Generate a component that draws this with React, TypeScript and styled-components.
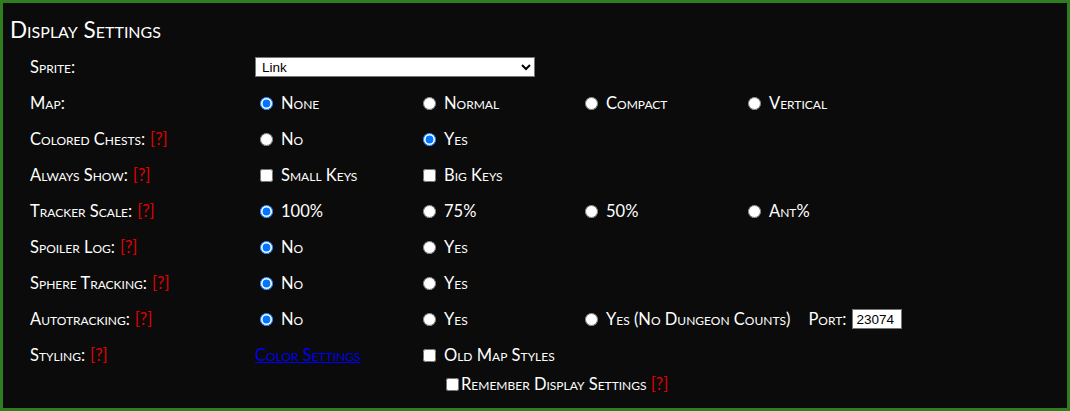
import React from "react";
import styled, { createGlobalStyle } from "styled-components";

const Global = createGlobalStyle`
  html, body { margin: 0; padding: 0; background: #0b0b0b; }
  body { font-family: "Lato", "DejaVu Sans", sans-serif; }
`;

const Panel = styled.div`
  box-sizing: border-box;
  width: 1070px;
  height: 411px;
  border: 3px solid #2e7d1f;
  background: #0b0b0b;
  color: #fff;
  padding: 14px 7px 0 7px;
  font-variant: small-caps;
  font-family: "Lato", "DejaVu Sans", sans-serif;
`;

const Title = styled.h2`
  margin: 0 0 6px 0;
  font-size: 22.5px;
  font-weight: normal;
  line-height: 26px;
`;

const Table = styled.div`
  display: grid;
  grid-template-columns: 225px 163px 162px 163px 163px;
  grid-auto-rows: 36px;
  padding-left: 20px;
  font-size: 16.5px;
`;

const Label = styled.div`
  display: flex;
  align-items: center;
  gap: 5px;
`;

const Cell = styled.label<{ $span?: number }>`
  display: flex;
  align-items: center;
  white-space: nowrap;
  grid-column: span ${(p) => p.$span ?? 1};
  input[type="radio"], input[type="checkbox"] {
    margin: 0 8px 0 5px;
    width: 13px;
    height: 13px;
  }
`;

const Help = styled.span`
  color: #e00000;
`;

const Select = styled.select`
  width: 280px;
  height: 20px;
  font-family: "Liberation Sans", Arial, sans-serif;
  font-size: 13.5px;
  font-variant: normal;
  padding: 0 2px;
  border: 1px solid #767676;
  border-radius: 0;
  background: #fff;
  color: #000;
`;

const Port = styled.span`
  margin-left: 18px;
  display: flex;
  align-items: center;
  gap: 6px;
`;

const PortInput = styled.input`
  width: 50px;
  height: 20px;
  box-sizing: border-box;
  font-family: "Liberation Sans", Arial, sans-serif;
  font-variant: normal;
  font-size: 13.5px;
  padding: 0 3px;
  border: 1px solid #767676;
  border-radius: 0;
`;

const Link = styled.a`
  color: #0000ee;
  text-decoration: underline;
`;

const RememberRow = styled.div`
  grid-column: 1 / -1;
  display: flex;
  align-items: center;
  padding-left: 416px;
  height: 22px;
  input { margin: 0 2px 0 0; width: 13px; height: 13px; }
`;

type Opt = { label: string; checked?: boolean; span?: number };

const RadioRow = ({ name, label, help, opts, extra }: { name: string; label: string; help?: boolean; opts: Opt[]; extra?: React.ReactNode }) => (
  <>
    <Label>
      {label}:{help && <Help>[?]</Help>}
    </Label>
    {opts.map((o, i) => (
      <Cell key={i} $span={o.span}>
        <input type="radio" name={name} defaultChecked={o.checked} />
        {o.label}
        {i === opts.length - 1 && extra}
      </Cell>
    ))}
    {Array.from({ length: 4 - opts.reduce((s, o) => s + (o.span ?? 1), 0) }).map((_, i) => (
      <div key={"e" + i} />
    ))}
  </>
);

export default function App() {
  return (
    <>
      <Global />
      <Panel>
        <Title>Display Settings</Title>
        <Table>
          <Label>Sprite:</Label>
          <Cell $span={4}>
            <Select defaultValue="Link">
              <option>Link</option>
            </Select>
          </Cell>
          <RadioRow
            name="map"
            label="Map"
            opts={[{ label: "None", checked: true }, { label: "Normal" }, { label: "Compact" }, { label: "Vertical" }]}
          />
          <RadioRow name="chests" label="Colored Chests" help opts={[{ label: "No" }, { label: "Yes", checked: true }]} />
          <Label>
            Always Show:<Help>[?]</Help>
          </Label>
          <Cell>
            <input type="checkbox" />
            Small Keys
          </Cell>
          <Cell>
            <input type="checkbox" />
            Big Keys
          </Cell>
          <div />
          <div />
          <RadioRow
            name="scale"
            label="Tracker Scale"
            help
            opts={[{ label: "100%", checked: true }, { label: "75%" }, { label: "50%" }, { label: "Ant%" }]}
          />
          <RadioRow name="spoiler" label="Spoiler Log" help opts={[{ label: "No", checked: true }, { label: "Yes" }]} />
          <RadioRow name="sphere" label="Sphere Tracking" help opts={[{ label: "No", checked: true }, { label: "Yes" }]} />
          <RadioRow
            name="auto"
            label="Autotracking"
            help
            opts={[{ label: "No", checked: true }, { label: "Yes" }, { label: "Yes (No Dungeon Counts)", span: 2 }]}
            extra={
              <Port>
                Port: <PortInput defaultValue="23074" />
              </Port>
            }
          />
          <Label>
            Styling:<Help>[?]</Help>
          </Label>
          <Cell>
            <Link href="#">Color Settings</Link>
          </Cell>
          <Cell>
            <input type="checkbox" />
            Old Map Styles
          </Cell>
          <div />
          <div />
          <RememberRow>
            <input type="checkbox" />
            Remember Display Settings&nbsp;<Help>[?]</Help>
          </RememberRow>
        </Table>
      </Panel>
    </>
  );
}
